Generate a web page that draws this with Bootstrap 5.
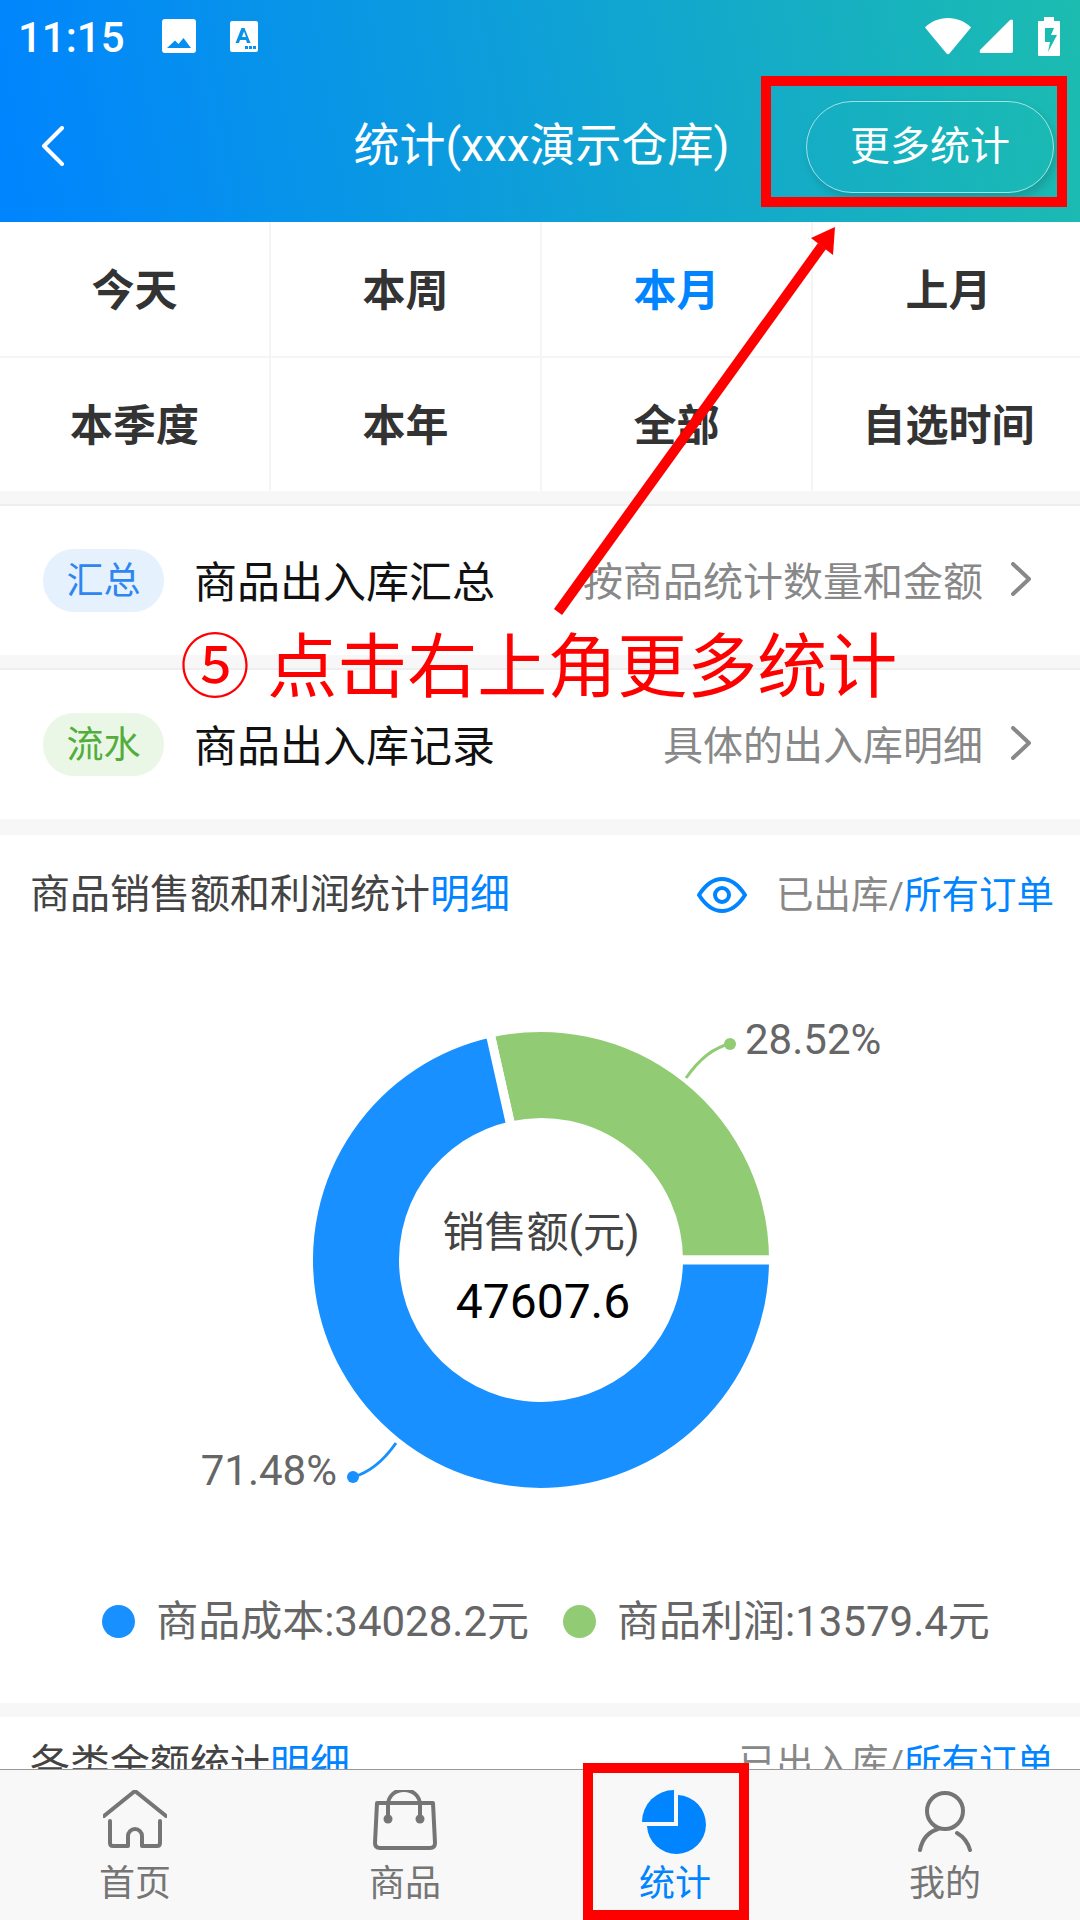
<!DOCTYPE html>
<html lang="zh-CN">

<head>
    <meta charset="UTF-8">
    <meta name="viewport" content="width=device-width, initial-scale=1.0">
    <title>统计</title>
    <link href="https://cdn.jsdelivr.net/npm/bootstrap@5.3.0/dist/css/bootstrap.min.css" rel="stylesheet">
    <style>
        body {
            width: 1080px;
            height: 1920px;
            overflow: hidden;
            font-family: Roboto, "Noto Sans CJK SC", sans-serif;
            background-color: #fff;
        }

        /* cabecera con degradado */
        .top-area {
            height: 222px;
            flex: none;
            color: #fff;
            background: linear-gradient(80deg, #0084ff, #1cbcb0);
        }

        .status-bar {
            height: 72px;
            padding: 0 20px 0 18px;
        }

        .status-time {
            font-size: 42px;
            font-weight: 500;
            line-height: 1;
            width: 144px;
            padding-top: 3px;
        }

        .title-bar {
            height: 150px;
        }

        .back-cell {
            width: 41px;
            margin: -2px 0 0 41px;
        }

        .page-title {
            left: 0;
            right: 0;
            top: 0;
            padding-left: 3px;
            line-height: 147px;
            font-size: 46px;
            text-align: center;
        }

        .more-btn {
            width: 248px;
            height: 92px;
            margin: 0 26px 0 0;
            border: 1px solid rgba(255, 255, 255, .6);
            border-radius: 46px;
            color: #fff;
            font-size: 40px;
            background: none;
            box-shadow: 3px 5px 8px rgba(0, 0, 0, .15);
        }

        .scroll-area > * {
            flex-shrink: 0;
        }

        .range-cell {
            flex: 0 0 271px;
            width: 271px;
            height: 134px;
            padding-top: 4px;
            font-size: 43px;
            font-weight: 700;
            color: #333;
            border-right: 2px solid #f5f5f5;
        }

        .range-row-low .range-cell {
            height: 133px;
        }

        .range-cell.last-col {
            flex: 1 1 0;
            width: auto;
            padding-left: 4px;
            border-right: 0;
        }

        .range-cell.is-on {
            color: #0084ff;
        }

        .range-sep {
            height: 2px;
            background-color: #f5f5f5;
        }

        .gray-gap {
            height: 15px;
            background-color: #f7f7f7;
        }

        .gray-gap.with-line {
            border-bottom: 2px solid #eee;
        }

        .gray-gap.gap-tall {
            height: 16px;
        }

        .gray-gap.gap-short {
            height: 14px;
        }

        .link-row {
            height: 149px;
            padding: 0 49px 0 43px;
        }

        .link-row svg {
            margin-top: -4px;
        }

        .tag-pill {
            width: 121px;
            height: 63px;
            padding-top: 3px;
            border-radius: 31px;
            font-size: 37px;
            margin-right: 30px;
        }

        .tag-blue {
            background-color: #e6f1fe;
            color: #2e86f0;
        }

        .tag-green {
            background-color: #eaf7e6;
            color: #52ad3c;
        }

        .row-name {
            padding-top: 5px;
            font-size: 43px;
            color: #111;
        }

        .row-hint {
            padding-top: 5px;
            font-size: 40px;
            color: #888;
            margin-right: 28px;
        }

        .sec-head {
            height: 120px;
            padding: 0 26px 0 30px;
        }

        .sec-head.is-cut {
            height: 53px;
            padding-top: 18px;
            align-items: flex-start !important;
        }

        .sec-title {
            font-size: 40px;
            color: #444;
        }

        .sec-side {
            font-size: 37.500px;
            color: #888;
        }

        .sec-head a,
        .sec-side a {
            color: #0084ff;
            text-decoration: none;
        }

        .eye-ico {
            margin-right: 29px;
        }

        .chart-svg {
            display: block;
        }

        .chart-svg text {
            font-family: Roboto, "Noto Sans CJK SC", sans-serif;
        }

        .legend-line {
            height: 168px;
            font-size: 42px;
            color: #666;
            padding: 4px 0 0 12px;
            gap: 21px;
        }

        .legend-dot {
            width: 33px;
            height: 33px;
            border-radius: 50%;
        }

        .tab-strip {
            height: 151px;
            flex: none;
            background-color: #f8f8f8;
            border-top: 1px solid #999;
        }

        .tab-item {
            width: 270px;
            padding-top: 20px;
            font-size: 36px;
            line-height: 1;
            color: #757575;
        }

        .tab-item.is-on {
            color: #0084ff;
        }

        .tab-item svg {
            display: block;
            margin-bottom: 14px;
        }

        /* anotaciones rojas encima de la captura */
        .mark-layer {
            position: absolute;
            left: 0;
            top: 0;
            pointer-events: none;
        }

        .mark-text {
            position: absolute;
            left: 180px;
            top: 618px;
            font-size: 70px;
            line-height: 100px;
            color: #f00;
            white-space: nowrap;
        }
    </style>
</head>

<body class="position-relative">
    <div class="d-flex flex-column h-100">
        <header class="top-area">
            <div class="status-bar d-flex align-items-center">
                <span class="status-time">11:15</span>
                <svg width="34" height="34" viewBox="0 0 34 34" style="margin-right: 26px">
                    <path fill="#fff" fill-rule="evenodd" d="M3 0h28a3 3 0 0 1 3 3v28a3 3 0 0 1-3 3H3a3 3 0 0 1-3-3V3a3 3 0 0 1 3-3zM5 29h24l-7.500-10-5 6-3.500-3.500z" />
                </svg>
                <svg width="28" height="31" viewBox="0 0 28 31" class="ms-2">
                    <path fill="#fff" fill-rule="evenodd" d="M2 0h24a2 2 0 0 1 2 2v27a2 2 0 0 1-2 2H2a2 2 0 0 1-2-2V2a2 2 0 0 1 2-2zM11.500 7l-6 15h3.500l1-3h6l1 3h3.500l-6-15zM14 10.500l2 5.500h-4zM15 25v3h3v-3zM19 25v3h3v-3zM23 25v3h3v-3z" />
                </svg>
                <svg width="46" height="37" viewBox="0 0 46 37" class="ms-auto">
                    <path fill="#fff" d="M0 9.500C6 3.500 14 0 23 0s17 3.500 23 9.500L24.500 35.500q-1.500 1.500-3 0z" />
                </svg>
                <svg width="34" height="34" viewBox="0 0 34 34" class="ms-2">
                    <path fill="#fff" d="M1 31 31 1q3-1.500 3 1v30q0 2-2 2H2q-2 0-1-3z" />
                </svg>
                <svg width="22" height="39" viewBox="0 0 22 39" style="margin-left: 25px">
                    <path fill="#fff" fill-rule="evenodd" d="M6 0h10v4h5q1 0 1 1v33q0 1-1 1H1q-1 0-1-1V5q0-1 1-1h5zM7 11v14h5l-2 10 9-17h-6l3-7z" />
                </svg>
            </div>
            <div class="title-bar d-flex align-items-center justify-content-between position-relative">
                <div class="back-cell">
                    <svg width="24" height="40" viewBox="0 0 24 40" class="d-block">
                        <path fill="none" stroke="#fff" stroke-width="4" stroke-linecap="round" stroke-linejoin="round" d="M21 2 3 20l18 18" />
                    </svg>
                </div>
                <div class="page-title position-absolute">统计(xxx演示仓库)</div>
                <button class="more-btn position-relative" type="button">更多统计</button>
            </div>
        </header>

        <main class="scroll-area flex-grow-1 overflow-hidden d-flex flex-column">
            <div class="row g-0">
                <div class="col-3 range-cell d-flex align-items-center justify-content-center">今天</div>
                <div class="col-3 range-cell d-flex align-items-center justify-content-center">本周</div>
                <div class="col-3 range-cell is-on d-flex align-items-center justify-content-center">本月</div>
                <div class="col-3 range-cell last-col d-flex align-items-center justify-content-center">上月</div>
            </div>
            <div class="range-sep"></div>
            <div class="row g-0 range-row-low">
                <div class="col-3 range-cell d-flex align-items-center justify-content-center">本季度</div>
                <div class="col-3 range-cell d-flex align-items-center justify-content-center">本年</div>
                <div class="col-3 range-cell d-flex align-items-center justify-content-center">全部</div>
                <div class="col-3 range-cell last-col d-flex align-items-center justify-content-center">自选时间</div>
            </div>
            <div class="gray-gap with-line"></div>

            <div class="link-row d-flex align-items-center">
                <span class="tag-pill tag-blue d-flex align-items-center justify-content-center">汇总</span>
                <span class="row-name">商品出入库汇总</span>
                <span class="row-hint ms-auto">按商品统计数量和金额</span>
                <svg width="20" height="34" viewBox="0 0 20 34">
                    <path fill="none" stroke="#888" stroke-width="4" stroke-linecap="round" stroke-linejoin="round" d="M2 2l16 15L2 32" />
                </svg>
            </div>
            <div class="gray-gap with-line"></div>
            <div class="link-row d-flex align-items-center">
                <span class="tag-pill tag-green d-flex align-items-center justify-content-center">流水</span>
                <span class="row-name">商品出入库记录</span>
                <span class="row-hint ms-auto">具体的出入库明细</span>
                <svg width="20" height="34" viewBox="0 0 20 34">
                    <path fill="none" stroke="#888" stroke-width="4" stroke-linecap="round" stroke-linejoin="round" d="M2 2l16 15L2 32" />
                </svg>
            </div>
            <div class="gray-gap gap-tall"></div>

            <div class="sec-head d-flex align-items-center">
                <span class="sec-title">商品销售额和利润统计<a href="#">明细</a></span>
                <svg width="50" height="36" viewBox="0 0 50 36" class="eye-ico ms-auto">
                    <path fill="none" stroke="#0084ff" stroke-width="4" stroke-linejoin="round" d="M2 18C9 7 16 2 25 2s16 5 23 16c-7 11-14 16-23 16S9 29 2 18z" />
                    <circle cx="25" cy="18" r="7" fill="none" stroke="#0084ff" stroke-width="4" />
                </svg>
                <span class="sec-side">已出库/<a href="#">所有订单</a></span>
            </div>

            <svg class="chart-svg" width="1080" height="580" viewBox="0 0 1080 580">
                <path fill="#91cb74" stroke="#fff" stroke-width="9" d="M490 78.100A232.500 232.500 0 0 1 773.500 305L678.500 305A137.500 137.500 0 0 0 510.800 170.800Z" />
                <path fill="#1890ff" stroke="#fff" stroke-width="9" d="M773.500 305A232.500 232.500 0 1 1 490 78.100L510.800 170.800A137.500 137.500 0 1 0 678.500 305Z" />
                <path fill="none" stroke="#91cb74" stroke-width="3" d="M686 123C700 103 715 92 730 89" />
                <circle cx="730" cy="89" r="6" fill="#91cb74" />
                <path fill="none" stroke="#1890ff" stroke-width="3" d="M396 488C382 508 368 518 353 522" />
                <circle cx="353" cy="522" r="6" fill="#1890ff" />
                <text x="745" y="99" font-size="42" fill="#666">28.52%</text>
                <text x="337" y="530" font-size="42" fill="#666" text-anchor="end">71.48%</text>
                <text x="541" y="292" font-size="42" fill="#444" text-anchor="middle">销售额(元)</text>
                <text x="543" y="363" font-size="48" fill="#000" text-anchor="middle">47607.6</text>
            </svg>

            <div class="legend-line d-flex align-items-center justify-content-center">
                <span class="legend-dot" style="background-color: #1890ff"></span>
                <span>商品成本:34028.2元</span>
                <span class="legend-dot" style="margin-left: 13px; background-color: #91cb74"></span>
                <span>商品利润:13579.4元</span>
            </div>
            <div class="gray-gap gap-short"></div>

            <div class="sec-head is-cut d-flex align-items-center">
                <span class="sec-title">各类金额统计<a href="#">明细</a></span>
                <span class="sec-side ms-auto">已出入库/<a href="#">所有订单</a></span>
            </div>
        </main>

        <nav class="tab-strip d-flex">
            <div class="tab-item d-flex flex-column align-items-center">
                <svg width="64" height="62" viewBox="0 0 64 62">
                    <path fill="none" stroke="#757575" stroke-width="4" stroke-linecap="round" stroke-linejoin="round" d="M1 26 32 1l31 25M7 31v22q0 3 3 3h15V46a7 7 0 0 1 14 0v10h15q3 0 3-3V31" />
                </svg>
                首页
            </div>
            <div class="tab-item d-flex flex-column align-items-center">
                <svg width="64" height="62" viewBox="0 2 64 62">
                    <path fill="none" stroke="#757575" stroke-width="4" stroke-linejoin="round" d="M4 15h56l2 40q0 5-5 5H7q-5 0-5-5zM15 30V17C15 8 22 2 31 2s16 6 16 15v13" />
                    <path fill="none" stroke="#757575" stroke-width="4" stroke-linecap="round" d="M24 15h15" />
                    <circle cx="15" cy="31" r="4.500" fill="#757575" />
                    <circle cx="47" cy="31" r="4.500" fill="#757575" />
                </svg>
                商品
            </div>
            <div class="tab-item is-on d-flex flex-column align-items-center">
                <svg width="66" height="66" viewBox="0 0 66 66" style="margin-bottom: 10px">
                    <path fill="#0084ff" d="M32 0V32H0A32 32 0 0 1 32 0z" />
                    <path fill="#0084ff" d="M36 5A29.500 29.500 0 1 1 5 36H36z" />
                </svg>
                统计
            </div>
            <div class="tab-item d-flex flex-column align-items-center">
                <svg width="64" height="62" viewBox="0 0 64 62">
                    <circle cx="32" cy="21" r="18" fill="none" stroke="#757575" stroke-width="4" />
                    <path fill="none" stroke="#757575" stroke-width="4" stroke-linecap="round" d="M7 60c2-10 8-18 18-21M44 43c7 4 11 10 13 17" />
                </svg>
                我的
            </div>
        </nav>
    </div>

    <svg class="mark-layer" width="1080" height="1920" viewBox="0 0 1080 1920">
        <rect x="766" y="81" width="296" height="121" fill="none" stroke="#f00" stroke-width="10" />
        <rect x="588" y="1768" width="156" height="147" fill="none" stroke="#f00" stroke-width="10" />
        <path fill="none" stroke="#f00" stroke-width="10" d="M558 612 822 246" />
        <path fill="#f00" d="M835 227 811 238 833 255z" />
    </svg>
    <div class="mark-text">⑤ 点击右上角更多统计</div>

    <script src="https://cdn.jsdelivr.net/npm/bootstrap@5.3.0/dist/js/bootstrap.bundle.min.js"></script>
</body>

</html>
